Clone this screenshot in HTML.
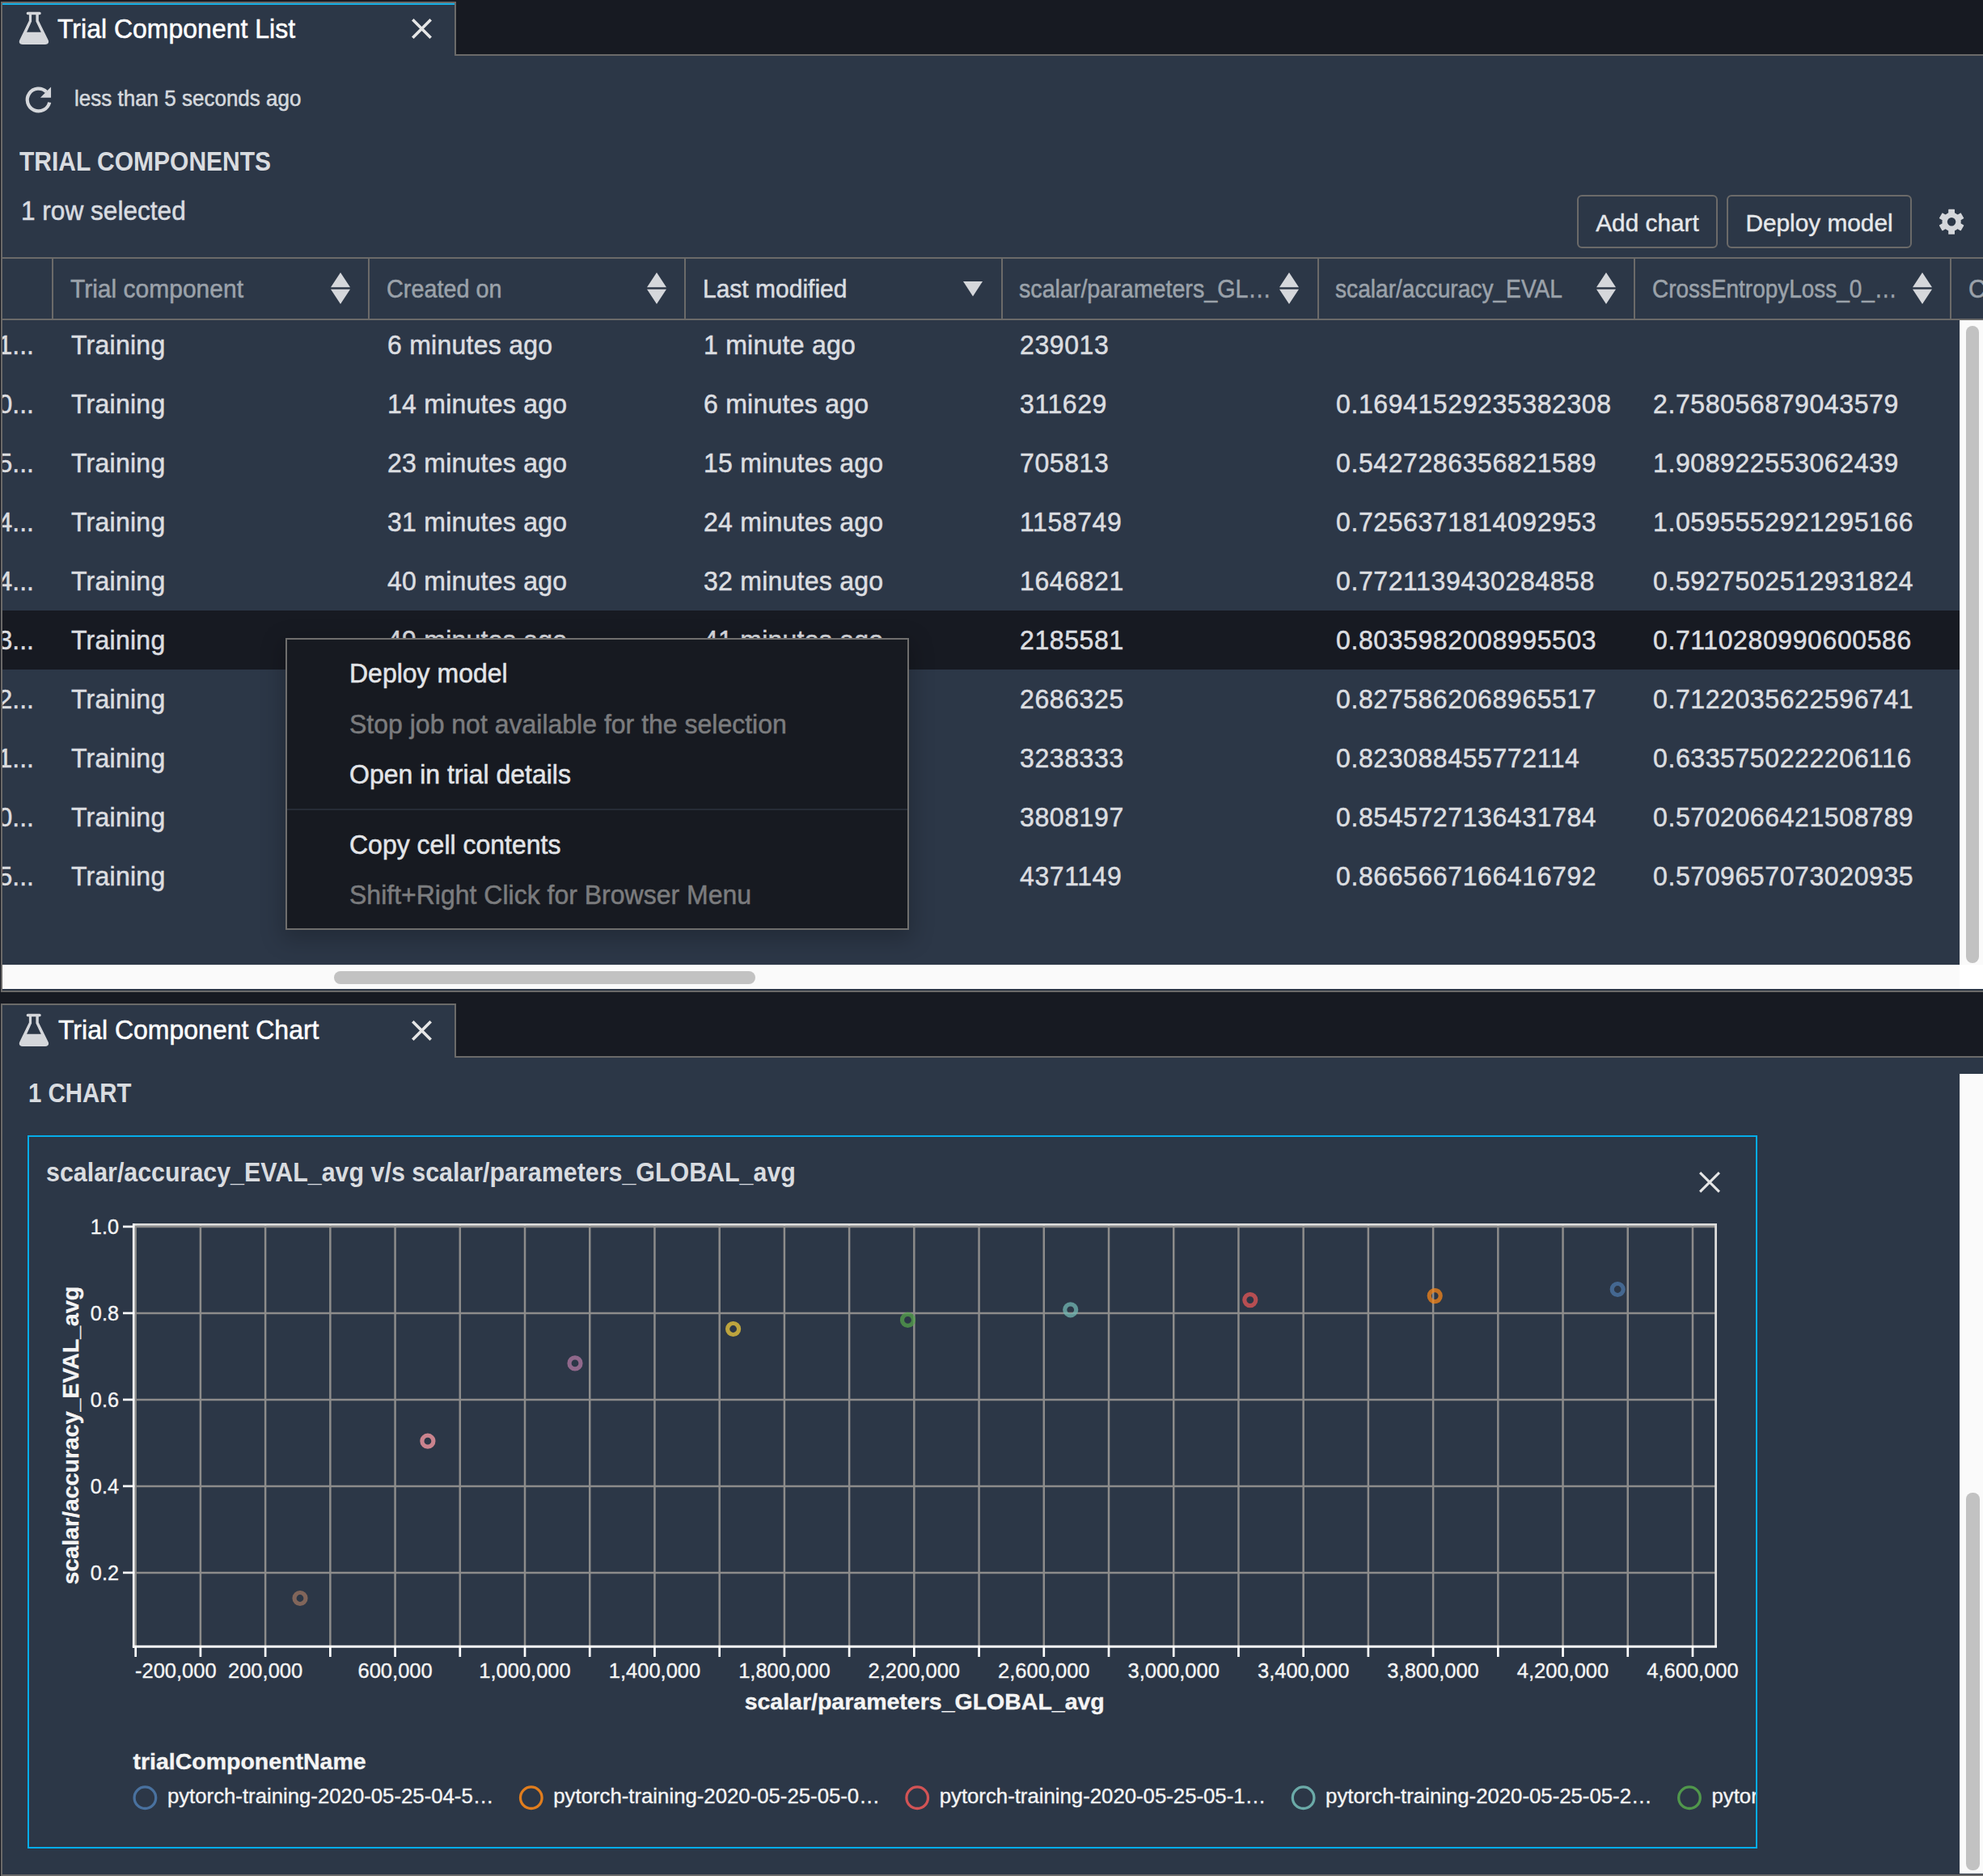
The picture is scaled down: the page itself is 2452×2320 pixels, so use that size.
<!DOCTYPE html>
<html><head><meta charset="utf-8"><style>
html,body{margin:0;padding:0;width:2452px;height:2320px;overflow:hidden;background:#171a22;font-family:"Liberation Sans", sans-serif;}
.r{position:absolute;}
.t{position:absolute;white-space:nowrap;line-height:1;-webkit-text-stroke:0.5px currentColor;transform-origin:0 84.67%;transform:scaleY(1.04);}
.t.b{-webkit-text-stroke:0;transform:scaleY(1.1);}
.btn{border:2px solid #6b6a69;border-radius:6px;color:#e6e8eb;font-size:29.8px;line-height:66px;text-align:center;-webkit-text-stroke:0.4px currentColor;box-sizing:content-box;}
</style></head><body>
<div class="r" style="left:1px;top:68px;width:2451px;height:1157px;background:#2c3747;"></div><div class="r" style="left:1px;top:68px;width:2px;height:1157px;background:#6b6a69;"></div><div class="r" style="left:563px;top:67px;width:1889px;height:2px;background:#6b6a69;"></div><div class="r" style="left:1px;top:2px;width:563px;height:67px;background:#2c3747;"></div><div class="r" style="left:1px;top:2px;width:563px;height:2px;background:#6b6a69;"></div><div class="r" style="left:1px;top:2px;width:2px;height:67px;background:#6b6a69;"></div><div class="r" style="left:562px;top:2px;width:2px;height:67px;background:#6b6a69;"></div><div class="r" style="left:3px;top:3.8px;width:559px;height:2.4px;background:#15b0e6;"></div><svg class="r" style="left:18px;top:10px" width="48" height="48" viewBox="0 0 48 48">
<path d="M16.4 4.7 H31 a1.75 1.75 0 0 1 0 3.5 H29.8 V15.4 L41.5 39.3 C43.1 42.6 41.5 44.9 38 44.9 H9.9 C6.4 44.9 4.8 42.6 6.4 39.3 L17.9 15.4 V8.2 H16.4 a1.75 1.75 0 0 1 0 -3.5 Z M21.1 8.2 V16.6 L15.1 29.8 H32.8 L26.4 16.6 V8.2 Z" fill="#d5d7db" fill-rule="evenodd"/>
</svg><div class="t" style="left:71.0px;top:19.9px;font-size:32px;color:#ffffff;font-weight:400;">Trial Component List</div><svg class="r" style="left:503px;top:17px" width="37" height="37" viewBox="0 0 37 37"><path d="M7.30 7.30 L29.70 29.70 M29.70 7.30 L7.30 29.70" stroke="#e6e6e6" stroke-width="3.6" stroke-linecap="butt"/></svg><svg class="r" style="left:26px;top:102px" width="44" height="44" viewBox="0 0 44 44">
<path d="M31.4 11.6 A13.9 13.9 0 1 0 35.2 24.6" fill="none" stroke="#d5d7db" stroke-width="4.2"/>
<path d="M37.05 5.6 V18.8 H23.9 Z" fill="#d5d7db"/>
</svg><div class="t" style="left:92.0px;top:109.0px;font-size:26px;color:#d5d9de;font-weight:400;">less than 5 seconds ago</div><div class="t b" style="left:24.0px;top:186.1px;font-size:30px;color:#d9dce0;font-weight:700;">TRIAL COMPONENTS</div><div class="t" style="left:26.0px;top:246.3px;font-size:31.6px;color:#d9dce0;font-weight:400;">1 row selected</div><div class="r btn" style="left:1950px;top:241px;width:170px;height:62px;">Add chart</div><div class="r btn" style="left:2135px;top:241px;width:225px;height:62px;">Deploy model</div><svg class="r" style="left:2393px;top:254px" width="40" height="40" viewBox="-20 -20 40 40">
<g fill="#d5d7db" transform="translate(0.1 0.3)">
<circle r="11.6"/>
<rect x="-3.9" y="-15.5" width="7.8" height="31" rx="0.6"/>
<rect x="-3.9" y="-15.5" width="7.8" height="31" rx="0.6" transform="rotate(60)"/>
<rect x="-3.9" y="-15.5" width="7.8" height="31" rx="0.6" transform="rotate(120)"/>
</g>
<circle cx="0.1" cy="0.3" r="5.2" fill="#2c3747"/>
</svg><div class="r" style="left:3px;top:396px;width:2420px;height:797px;overflow:hidden"><div class="r" style="left:0px;top:359px;width:2420px;height:73px;background:#171a22"></div><div class="t" style="right:2381px;top:14.9px;font-size:32px;color:#dcdee1">1...</div><div class="t" style="left:85px;top:14.9px;font-size:32px;color:#dcdee1;letter-spacing:0.25px;">Training</div><div class="t" style="left:476px;top:14.9px;font-size:32px;color:#dcdee1;letter-spacing:0.25px;">6 minutes ago</div><div class="t" style="left:867px;top:14.9px;font-size:32px;color:#dcdee1;letter-spacing:0.25px;">1 minute ago</div><div class="t" style="left:1258px;top:14.9px;font-size:32px;color:#dcdee1;letter-spacing:0.6px;">239013</div><div class="t" style="right:2381px;top:87.9px;font-size:32px;color:#dcdee1">0...</div><div class="t" style="left:85px;top:87.9px;font-size:32px;color:#dcdee1;letter-spacing:0.25px;">Training</div><div class="t" style="left:476px;top:87.9px;font-size:32px;color:#dcdee1;letter-spacing:0.25px;">14 minutes ago</div><div class="t" style="left:867px;top:87.9px;font-size:32px;color:#dcdee1;letter-spacing:0.25px;">6 minutes ago</div><div class="t" style="left:1258px;top:87.9px;font-size:32px;color:#dcdee1;letter-spacing:0.6px;">311629</div><div class="t" style="left:1649px;top:87.9px;font-size:32px;color:#dcdee1;letter-spacing:0.6px;">0.16941529235382308</div><div class="t" style="left:2041px;top:87.9px;font-size:32px;color:#dcdee1;letter-spacing:0.6px;">2.758056879043579</div><div class="t" style="right:2381px;top:160.9px;font-size:32px;color:#dcdee1">5...</div><div class="t" style="left:85px;top:160.9px;font-size:32px;color:#dcdee1;letter-spacing:0.25px;">Training</div><div class="t" style="left:476px;top:160.9px;font-size:32px;color:#dcdee1;letter-spacing:0.25px;">23 minutes ago</div><div class="t" style="left:867px;top:160.9px;font-size:32px;color:#dcdee1;letter-spacing:0.25px;">15 minutes ago</div><div class="t" style="left:1258px;top:160.9px;font-size:32px;color:#dcdee1;letter-spacing:0.6px;">705813</div><div class="t" style="left:1649px;top:160.9px;font-size:32px;color:#dcdee1;letter-spacing:0.6px;">0.5427286356821589</div><div class="t" style="left:2041px;top:160.9px;font-size:32px;color:#dcdee1;letter-spacing:0.6px;">1.908922553062439</div><div class="t" style="right:2381px;top:233.9px;font-size:32px;color:#dcdee1">4...</div><div class="t" style="left:85px;top:233.9px;font-size:32px;color:#dcdee1;letter-spacing:0.25px;">Training</div><div class="t" style="left:476px;top:233.9px;font-size:32px;color:#dcdee1;letter-spacing:0.25px;">31 minutes ago</div><div class="t" style="left:867px;top:233.9px;font-size:32px;color:#dcdee1;letter-spacing:0.25px;">24 minutes ago</div><div class="t" style="left:1258px;top:233.9px;font-size:32px;color:#dcdee1;letter-spacing:0.6px;">1158749</div><div class="t" style="left:1649px;top:233.9px;font-size:32px;color:#dcdee1;letter-spacing:0.6px;">0.7256371814092953</div><div class="t" style="left:2041px;top:233.9px;font-size:32px;color:#dcdee1;letter-spacing:0.6px;">1.0595552921295166</div><div class="t" style="right:2381px;top:306.9px;font-size:32px;color:#dcdee1">4...</div><div class="t" style="left:85px;top:306.9px;font-size:32px;color:#dcdee1;letter-spacing:0.25px;">Training</div><div class="t" style="left:476px;top:306.9px;font-size:32px;color:#dcdee1;letter-spacing:0.25px;">40 minutes ago</div><div class="t" style="left:867px;top:306.9px;font-size:32px;color:#dcdee1;letter-spacing:0.25px;">32 minutes ago</div><div class="t" style="left:1258px;top:306.9px;font-size:32px;color:#dcdee1;letter-spacing:0.6px;">1646821</div><div class="t" style="left:1649px;top:306.9px;font-size:32px;color:#dcdee1;letter-spacing:0.6px;">0.7721139430284858</div><div class="t" style="left:2041px;top:306.9px;font-size:32px;color:#dcdee1;letter-spacing:0.6px;">0.5927502512931824</div><div class="t" style="right:2381px;top:379.9px;font-size:32px;color:#dcdee1">3...</div><div class="t" style="left:85px;top:379.9px;font-size:32px;color:#dcdee1;letter-spacing:0.25px;">Training</div><div class="t" style="left:476px;top:379.9px;font-size:32px;color:#dcdee1;letter-spacing:0.25px;">49 minutes ago</div><div class="t" style="left:867px;top:379.9px;font-size:32px;color:#dcdee1;letter-spacing:0.25px;">41 minutes ago</div><div class="t" style="left:1258px;top:379.9px;font-size:32px;color:#dcdee1;letter-spacing:0.6px;">2185581</div><div class="t" style="left:1649px;top:379.9px;font-size:32px;color:#dcdee1;letter-spacing:0.6px;">0.8035982008995503</div><div class="t" style="left:2041px;top:379.9px;font-size:32px;color:#dcdee1;letter-spacing:0.6px;">0.7110280990600586</div><div class="t" style="right:2381px;top:452.9px;font-size:32px;color:#dcdee1">2...</div><div class="t" style="left:85px;top:452.9px;font-size:32px;color:#dcdee1;letter-spacing:0.25px;">Training</div><div class="t" style="left:1258px;top:452.9px;font-size:32px;color:#dcdee1;letter-spacing:0.6px;">2686325</div><div class="t" style="left:1649px;top:452.9px;font-size:32px;color:#dcdee1;letter-spacing:0.6px;">0.8275862068965517</div><div class="t" style="left:2041px;top:452.9px;font-size:32px;color:#dcdee1;letter-spacing:0.6px;">0.7122035622596741</div><div class="t" style="right:2381px;top:525.9px;font-size:32px;color:#dcdee1">1...</div><div class="t" style="left:85px;top:525.9px;font-size:32px;color:#dcdee1;letter-spacing:0.25px;">Training</div><div class="t" style="left:1258px;top:525.9px;font-size:32px;color:#dcdee1;letter-spacing:0.6px;">3238333</div><div class="t" style="left:1649px;top:525.9px;font-size:32px;color:#dcdee1;letter-spacing:0.6px;">0.823088455772114</div><div class="t" style="left:2041px;top:525.9px;font-size:32px;color:#dcdee1;letter-spacing:0.6px;">0.6335750222206116</div><div class="t" style="right:2381px;top:598.9px;font-size:32px;color:#dcdee1">0...</div><div class="t" style="left:85px;top:598.9px;font-size:32px;color:#dcdee1;letter-spacing:0.25px;">Training</div><div class="t" style="left:1258px;top:598.9px;font-size:32px;color:#dcdee1;letter-spacing:0.6px;">3808197</div><div class="t" style="left:1649px;top:598.9px;font-size:32px;color:#dcdee1;letter-spacing:0.6px;">0.8545727136431784</div><div class="t" style="left:2041px;top:598.9px;font-size:32px;color:#dcdee1;letter-spacing:0.6px;">0.5702066421508789</div><div class="t" style="right:2381px;top:671.9px;font-size:32px;color:#dcdee1">5...</div><div class="t" style="left:85px;top:671.9px;font-size:32px;color:#dcdee1;letter-spacing:0.25px;">Training</div><div class="t" style="left:1258px;top:671.9px;font-size:32px;color:#dcdee1;letter-spacing:0.6px;">4371149</div><div class="t" style="left:1649px;top:671.9px;font-size:32px;color:#dcdee1;letter-spacing:0.6px;">0.8665667166416792</div><div class="t" style="left:2041px;top:671.9px;font-size:32px;color:#dcdee1;letter-spacing:0.6px;">0.5709657073020935</div></div><div class="r" style="left:3px;top:318px;width:2449px;height:2px;background:#6b6a69;"></div><div class="r" style="left:3px;top:394px;width:2449px;height:2px;background:#6b6a69;"></div><div class="r" style="left:3px;top:320px;width:2449px;height:74px;overflow:hidden"><div class="r" style="left:61px;top:0px;width:2px;height:74px;background:#6b6a69"></div><div class="r" style="left:452px;top:0px;width:2px;height:74px;background:#6b6a69"></div><div class="r" style="left:843px;top:0px;width:2px;height:74px;background:#6b6a69"></div><div class="r" style="left:1235px;top:0px;width:2px;height:74px;background:#6b6a69"></div><div class="r" style="left:1626px;top:0px;width:2px;height:74px;background:#6b6a69"></div><div class="r" style="left:2017px;top:0px;width:2px;height:74px;background:#6b6a69"></div><div class="r" style="left:2408px;top:0px;width:2px;height:74px;background:#6b6a69"></div><div class="t" style="left:84px;top:22.6px;font-size:30px;color:#9ba2aa;transform:scale(1.0,1.04)">Trial component</div><svg class="r" style="left:406px;top:17px" width="24" height="39" viewBox="0 0 24 39"><path d="M12 0 L24 18.2 H0 Z M0 20.8 H24 L12 39 Z" fill="#d5d7db"/></svg><div class="t" style="left:475px;top:22.6px;font-size:30px;color:#9ba2aa;transform:scale(0.9595687331536388,1.04)">Created on</div><svg class="r" style="left:797px;top:17px" width="24" height="39" viewBox="0 0 24 39"><path d="M12 0 L24 18.2 H0 Z M0 20.8 H24 L12 39 Z" fill="#d5d7db"/></svg><div class="t" style="left:866px;top:22.6px;font-size:30px;color:#dadde1;transform:scale(1.0,1.04)">Last modified</div><svg class="r" style="left:1188px;top:28px" width="24" height="19" viewBox="0 0 24 19"><path d="M0 0 H24 L12 18.5 Z" fill="#d5d7db"/></svg><div class="t" style="left:1257px;top:22.6px;font-size:30px;color:#9ba2aa;transform:scale(0.9547123623011016,1.04)">scalar/parameters_GL…</div><svg class="r" style="left:1579px;top:17px" width="24" height="39" viewBox="0 0 24 39"><path d="M12 0 L24 18.2 H0 Z M0 20.8 H24 L12 39 Z" fill="#d5d7db"/></svg><div class="t" style="left:1648px;top:22.6px;font-size:30px;color:#9ba2aa;transform:scale(0.9379172229639519,1.04)">scalar/accuracy_EVAL</div><svg class="r" style="left:1971px;top:17px" width="24" height="39" viewBox="0 0 24 39"><path d="M12 0 L24 18.2 H0 Z M0 20.8 H24 L12 39 Z" fill="#d5d7db"/></svg><div class="t" style="left:2040px;top:22.6px;font-size:30px;color:#9ba2aa;transform:scale(0.931119311193112,1.04)">CrossEntropyLoss_0_…</div><svg class="r" style="left:2362px;top:17px" width="24" height="39" viewBox="0 0 24 39"><path d="M12 0 L24 18.2 H0 Z M0 20.8 H24 L12 39 Z" fill="#d5d7db"/></svg><div class="t" style="left:2431px;top:22.6px;font-size:30px;color:#9ba2aa;transform:scale(1.0,1.04)">C</div></div><div class="r" style="left:2423px;top:396px;width:29px;height:797px;background:#fafafa;border-left:1px solid #e8e8e8;box-sizing:border-box"></div><div class="r" style="left:2431px;top:403px;width:16px;height:788px;background:#c2c2c2;border-radius:8px"></div><div class="r" style="left:3px;top:1193px;width:2420px;height:30px;background:#fafafa;border-top:1px solid #e8e8e8;box-sizing:border-box"></div><div class="r" style="left:2423px;top:1193px;width:29px;height:30px;background:#ffffff;"></div><div class="r" style="left:413px;top:1201px;width:521px;height:16px;background:#c2c2c2;border-radius:8px"></div><div class="r" style="left:1px;top:1225px;width:2451px;height:2px;background:#6b6a69;"></div><div class="r" style="left:353px;top:789px;width:771px;height:361px;background:#171a21;border:2px solid #6f6e6d;box-sizing:border-box;box-shadow:0 8px 26px 4px rgba(0,0,0,0.22)"></div><div class="r" style="left:355px;top:1000px;width:767px;height:2px;background:#262c36;"></div><div class="t" style="left:432.0px;top:817.1px;font-size:32px;color:#e3e5e8;font-weight:400;">Deploy model</div><div class="t" style="left:432.0px;top:880.4px;font-size:32px;color:#7b7c7e;font-weight:400;">Stop job not available for the selection</div><div class="t" style="left:432.0px;top:942.4px;font-size:32px;color:#e3e5e8;font-weight:400;">Open in trial details</div><div class="t" style="left:432.0px;top:1029.3px;font-size:32px;color:#e3e5e8;font-weight:400;">Copy cell contents</div><div class="t" style="left:432.0px;top:1091.3px;font-size:32px;color:#7b7c7e;font-weight:400;">Shift+Right Click for Browser Menu</div><div class="r" style="left:563px;top:1306px;width:1889px;height:2px;background:#6b6a69;"></div><div class="r" style="left:1px;top:1308px;width:2451px;height:1010px;background:#2c3747;"></div><div class="r" style="left:1px;top:1308px;width:2px;height:1010px;background:#6b6a69;"></div><div class="r" style="left:1px;top:1241px;width:563px;height:67px;background:#2c3747;"></div><div class="r" style="left:1px;top:1241px;width:563px;height:2px;background:#6b6a69;"></div><div class="r" style="left:1px;top:1241px;width:2px;height:67px;background:#6b6a69;"></div><div class="r" style="left:562px;top:1241px;width:2px;height:67px;background:#6b6a69;"></div><svg class="r" style="left:18px;top:1249px" width="48" height="48" viewBox="0 0 48 48">
<path d="M16.4 4.7 H31 a1.75 1.75 0 0 1 0 3.5 H29.8 V15.4 L41.5 39.3 C43.1 42.6 41.5 44.9 38 44.9 H9.9 C6.4 44.9 4.8 42.6 6.4 39.3 L17.9 15.4 V8.2 H16.4 a1.75 1.75 0 0 1 0 -3.5 Z M21.1 8.2 V16.6 L15.1 29.8 H32.8 L26.4 16.6 V8.2 Z" fill="#d5d7db" fill-rule="evenodd"/>
</svg><div class="t" style="left:72.0px;top:1257.9px;font-size:32px;color:#ffffff;font-weight:400;">Trial Component Chart</div><svg class="r" style="left:503px;top:1256px" width="37" height="37" viewBox="0 0 37 37"><path d="M7.30 7.30 L29.70 29.70 M29.70 7.30 L7.30 29.70" stroke="#e6e6e6" stroke-width="3.6" stroke-linecap="butt"/></svg><div class="r" style="left:1px;top:2318px;width:2451px;height:2px;background:#6b6a69;"></div><div class="t b" style="left:35.0px;top:1338.1px;font-size:29.4px;color:#d9dce0;font-weight:700;">1 CHART</div><div class="r" style="left:2423px;top:1328px;width:29px;height:989px;background:#fafafa;border-left:1px solid #e8e8e8;box-sizing:border-box"></div><div class="r" style="left:2431px;top:1846px;width:17px;height:467px;background:#c2c2c2;border-radius:8px"></div><div class="r" style="left:34px;top:1404px;width:2139px;height:882px;border:2px solid #05adea;box-sizing:border-box;overflow:hidden"></div><div class="t b" style="left:57.0px;top:1434.7px;font-size:30.4px;color:#d9dce0;font-weight:700;">scalar/accuracy_EVAL_avg v/s scalar/parameters_GLOBAL_avg</div><svg class="r" style="left:2095px;top:1443px" width="38" height="38" viewBox="0 0 38 38"><path d="M7.08 7.08 L30.92 30.92 M30.92 7.08 L7.08 30.92" stroke="#e6e6e6" stroke-width="3" stroke-linecap="butt"/></svg><svg class="r" style="left:0px;top:0px" width="2452" height="2320" viewBox="0 0 2452 2320"><line x1="167.70" y1="1514.35" x2="167.70" y2="2036.35" stroke="#8d8c8b" stroke-width="2.5"/><line x1="247.92" y1="1514.35" x2="247.92" y2="2036.35" stroke="#8d8c8b" stroke-width="2.5"/><line x1="328.14" y1="1514.35" x2="328.14" y2="2036.35" stroke="#8d8c8b" stroke-width="2.5"/><line x1="408.36" y1="1514.35" x2="408.36" y2="2036.35" stroke="#8d8c8b" stroke-width="2.5"/><line x1="488.58" y1="1514.35" x2="488.58" y2="2036.35" stroke="#8d8c8b" stroke-width="2.5"/><line x1="568.80" y1="1514.35" x2="568.80" y2="2036.35" stroke="#8d8c8b" stroke-width="2.5"/><line x1="649.02" y1="1514.35" x2="649.02" y2="2036.35" stroke="#8d8c8b" stroke-width="2.5"/><line x1="729.24" y1="1514.35" x2="729.24" y2="2036.35" stroke="#8d8c8b" stroke-width="2.5"/><line x1="809.46" y1="1514.35" x2="809.46" y2="2036.35" stroke="#8d8c8b" stroke-width="2.5"/><line x1="889.68" y1="1514.35" x2="889.68" y2="2036.35" stroke="#8d8c8b" stroke-width="2.5"/><line x1="969.90" y1="1514.35" x2="969.90" y2="2036.35" stroke="#8d8c8b" stroke-width="2.5"/><line x1="1050.12" y1="1514.35" x2="1050.12" y2="2036.35" stroke="#8d8c8b" stroke-width="2.5"/><line x1="1130.34" y1="1514.35" x2="1130.34" y2="2036.35" stroke="#8d8c8b" stroke-width="2.5"/><line x1="1210.56" y1="1514.35" x2="1210.56" y2="2036.35" stroke="#8d8c8b" stroke-width="2.5"/><line x1="1290.78" y1="1514.35" x2="1290.78" y2="2036.35" stroke="#8d8c8b" stroke-width="2.5"/><line x1="1371.00" y1="1514.35" x2="1371.00" y2="2036.35" stroke="#8d8c8b" stroke-width="2.5"/><line x1="1451.22" y1="1514.35" x2="1451.22" y2="2036.35" stroke="#8d8c8b" stroke-width="2.5"/><line x1="1531.44" y1="1514.35" x2="1531.44" y2="2036.35" stroke="#8d8c8b" stroke-width="2.5"/><line x1="1611.66" y1="1514.35" x2="1611.66" y2="2036.35" stroke="#8d8c8b" stroke-width="2.5"/><line x1="1691.88" y1="1514.35" x2="1691.88" y2="2036.35" stroke="#8d8c8b" stroke-width="2.5"/><line x1="1772.10" y1="1514.35" x2="1772.10" y2="2036.35" stroke="#8d8c8b" stroke-width="2.5"/><line x1="1852.32" y1="1514.35" x2="1852.32" y2="2036.35" stroke="#8d8c8b" stroke-width="2.5"/><line x1="1932.54" y1="1514.35" x2="1932.54" y2="2036.35" stroke="#8d8c8b" stroke-width="2.5"/><line x1="2012.76" y1="1514.35" x2="2012.76" y2="2036.35" stroke="#8d8c8b" stroke-width="2.5"/><line x1="2092.98" y1="1514.35" x2="2092.98" y2="2036.35" stroke="#8d8c8b" stroke-width="2.5"/><line x1="165.25" y1="1944.90" x2="2121.6" y2="1944.90" stroke="#8d8c8b" stroke-width="2.5"/><line x1="165.25" y1="1837.91" x2="2121.6" y2="1837.91" stroke="#8d8c8b" stroke-width="2.5"/><line x1="165.25" y1="1730.93" x2="2121.6" y2="1730.93" stroke="#8d8c8b" stroke-width="2.5"/><line x1="165.25" y1="1623.94" x2="2121.6" y2="1623.94" stroke="#8d8c8b" stroke-width="2.5"/><line x1="165.25" y1="1516.95" x2="2121.6" y2="1516.95" stroke="#8d8c8b" stroke-width="2.5"/><line x1="165.25" y1="1514.35" x2="2123.0" y2="1514.35" stroke="#dddcdb" stroke-width="2.6"/><line x1="2121.6" y1="1513.05" x2="2121.6" y2="2036.35" stroke="#dddcdb" stroke-width="2.8"/><line x1="165.25" y1="1513.05" x2="165.25" y2="2037.85" stroke="#ffffff" stroke-width="2.7"/><line x1="163.9" y1="2036.35" x2="2123.0" y2="2036.35" stroke="#ffffff" stroke-width="3"/><line x1="167.70" y1="2036.35" x2="167.70" y2="2049" stroke="#ffffff" stroke-width="2.7"/><line x1="247.92" y1="2036.35" x2="247.92" y2="2049" stroke="#ffffff" stroke-width="2.7"/><line x1="328.14" y1="2036.35" x2="328.14" y2="2049" stroke="#ffffff" stroke-width="2.7"/><line x1="408.36" y1="2036.35" x2="408.36" y2="2049" stroke="#ffffff" stroke-width="2.7"/><line x1="488.58" y1="2036.35" x2="488.58" y2="2049" stroke="#ffffff" stroke-width="2.7"/><line x1="568.80" y1="2036.35" x2="568.80" y2="2049" stroke="#ffffff" stroke-width="2.7"/><line x1="649.02" y1="2036.35" x2="649.02" y2="2049" stroke="#ffffff" stroke-width="2.7"/><line x1="729.24" y1="2036.35" x2="729.24" y2="2049" stroke="#ffffff" stroke-width="2.7"/><line x1="809.46" y1="2036.35" x2="809.46" y2="2049" stroke="#ffffff" stroke-width="2.7"/><line x1="889.68" y1="2036.35" x2="889.68" y2="2049" stroke="#ffffff" stroke-width="2.7"/><line x1="969.90" y1="2036.35" x2="969.90" y2="2049" stroke="#ffffff" stroke-width="2.7"/><line x1="1050.12" y1="2036.35" x2="1050.12" y2="2049" stroke="#ffffff" stroke-width="2.7"/><line x1="1130.34" y1="2036.35" x2="1130.34" y2="2049" stroke="#ffffff" stroke-width="2.7"/><line x1="1210.56" y1="2036.35" x2="1210.56" y2="2049" stroke="#ffffff" stroke-width="2.7"/><line x1="1290.78" y1="2036.35" x2="1290.78" y2="2049" stroke="#ffffff" stroke-width="2.7"/><line x1="1371.00" y1="2036.35" x2="1371.00" y2="2049" stroke="#ffffff" stroke-width="2.7"/><line x1="1451.22" y1="2036.35" x2="1451.22" y2="2049" stroke="#ffffff" stroke-width="2.7"/><line x1="1531.44" y1="2036.35" x2="1531.44" y2="2049" stroke="#ffffff" stroke-width="2.7"/><line x1="1611.66" y1="2036.35" x2="1611.66" y2="2049" stroke="#ffffff" stroke-width="2.7"/><line x1="1691.88" y1="2036.35" x2="1691.88" y2="2049" stroke="#ffffff" stroke-width="2.7"/><line x1="1772.10" y1="2036.35" x2="1772.10" y2="2049" stroke="#ffffff" stroke-width="2.7"/><line x1="1852.32" y1="2036.35" x2="1852.32" y2="2049" stroke="#ffffff" stroke-width="2.7"/><line x1="1932.54" y1="2036.35" x2="1932.54" y2="2049" stroke="#ffffff" stroke-width="2.7"/><line x1="2012.76" y1="2036.35" x2="2012.76" y2="2049" stroke="#ffffff" stroke-width="2.7"/><line x1="2092.98" y1="2036.35" x2="2092.98" y2="2049" stroke="#ffffff" stroke-width="2.7"/><line x1="152" y1="1944.90" x2="165.25" y2="1944.90" stroke="#ffffff" stroke-width="2.7"/><text x="147" y="1953.5" text-anchor="end" font-size="25.3" fill="#f4f4f4" stroke="#f4f4f4" stroke-width="0.35" font-family="Liberation Sans">0.2</text><line x1="152" y1="1837.91" x2="165.25" y2="1837.91" stroke="#ffffff" stroke-width="2.7"/><text x="147" y="1846.5" text-anchor="end" font-size="25.3" fill="#f4f4f4" stroke="#f4f4f4" stroke-width="0.35" font-family="Liberation Sans">0.4</text><line x1="152" y1="1730.93" x2="165.25" y2="1730.93" stroke="#ffffff" stroke-width="2.7"/><text x="147" y="1739.5" text-anchor="end" font-size="25.3" fill="#f4f4f4" stroke="#f4f4f4" stroke-width="0.35" font-family="Liberation Sans">0.6</text><line x1="152" y1="1623.94" x2="165.25" y2="1623.94" stroke="#ffffff" stroke-width="2.7"/><text x="147" y="1632.5" text-anchor="end" font-size="25.3" fill="#f4f4f4" stroke="#f4f4f4" stroke-width="0.35" font-family="Liberation Sans">0.8</text><line x1="152" y1="1516.95" x2="165.25" y2="1516.95" stroke="#ffffff" stroke-width="2.7"/><text x="147" y="1525.5" text-anchor="end" font-size="25.3" fill="#f4f4f4" stroke="#f4f4f4" stroke-width="0.35" font-family="Liberation Sans">1.0</text><text x="167.0" y="2075" text-anchor="start" font-size="25.5" fill="#f4f4f4" stroke="#f4f4f4" stroke-width="0.35" font-family="Liberation Sans">-200,000</text><text x="328.1" y="2075" text-anchor="middle" font-size="25.5" fill="#f4f4f4" stroke="#f4f4f4" stroke-width="0.35" font-family="Liberation Sans">200,000</text><text x="488.6" y="2075" text-anchor="middle" font-size="25.5" fill="#f4f4f4" stroke="#f4f4f4" stroke-width="0.35" font-family="Liberation Sans">600,000</text><text x="649.0" y="2075" text-anchor="middle" font-size="25.5" fill="#f4f4f4" stroke="#f4f4f4" stroke-width="0.35" font-family="Liberation Sans">1,000,000</text><text x="809.5" y="2075" text-anchor="middle" font-size="25.5" fill="#f4f4f4" stroke="#f4f4f4" stroke-width="0.35" font-family="Liberation Sans">1,400,000</text><text x="969.9" y="2075" text-anchor="middle" font-size="25.5" fill="#f4f4f4" stroke="#f4f4f4" stroke-width="0.35" font-family="Liberation Sans">1,800,000</text><text x="1130.3" y="2075" text-anchor="middle" font-size="25.5" fill="#f4f4f4" stroke="#f4f4f4" stroke-width="0.35" font-family="Liberation Sans">2,200,000</text><text x="1290.8" y="2075" text-anchor="middle" font-size="25.5" fill="#f4f4f4" stroke="#f4f4f4" stroke-width="0.35" font-family="Liberation Sans">2,600,000</text><text x="1451.2" y="2075" text-anchor="middle" font-size="25.5" fill="#f4f4f4" stroke="#f4f4f4" stroke-width="0.35" font-family="Liberation Sans">3,000,000</text><text x="1611.7" y="2075" text-anchor="middle" font-size="25.5" fill="#f4f4f4" stroke="#f4f4f4" stroke-width="0.35" font-family="Liberation Sans">3,400,000</text><text x="1772.1" y="2075" text-anchor="middle" font-size="25.5" fill="#f4f4f4" stroke="#f4f4f4" stroke-width="0.35" font-family="Liberation Sans">3,800,000</text><text x="1932.5" y="2075" text-anchor="middle" font-size="25.5" fill="#f4f4f4" stroke="#f4f4f4" stroke-width="0.35" font-family="Liberation Sans">4,200,000</text><text x="2093.0" y="2075" text-anchor="middle" font-size="25.5" fill="#f4f4f4" stroke="#f4f4f4" stroke-width="0.35" font-family="Liberation Sans">4,600,000</text><text x="1143.2" y="2114" text-anchor="middle" font-size="28.5" font-weight="700" fill="#f4f4f4" stroke="#f4f4f4" stroke-width="0.35" font-family="Liberation Sans">scalar/parameters_GLOBAL_avg</text><text transform="translate(96.5 1775.1) rotate(-90)" text-anchor="middle" font-size="28.5" font-weight="700" fill="#f4f4f4" stroke="#f4f4f4" stroke-width="0.35" font-family="Liberation Sans">scalar/accuracy_EVAL_avg</text><circle cx="371" cy="1976.5" r="7" fill="none" stroke="#9d7660" stroke-width="5.2" opacity="0.75"/><circle cx="528.9" cy="1782.2" r="7" fill="none" stroke="#ff9da6" stroke-width="5.2" opacity="0.75"/><circle cx="711" cy="1685.9" r="7" fill="none" stroke="#b279a2" stroke-width="5.2" opacity="0.75"/><circle cx="906.6" cy="1643.5" r="7" fill="none" stroke="#eeca3b" stroke-width="5.2" opacity="0.75"/><circle cx="1122.5" cy="1632.4" r="7" fill="none" stroke="#54a24b" stroke-width="5.2" opacity="0.75"/><circle cx="1323.7" cy="1619.8" r="7" fill="none" stroke="#72b7b2" stroke-width="5.2" opacity="0.75"/><circle cx="1545.8" cy="1607.6" r="7" fill="none" stroke="#e45756" stroke-width="5.2" opacity="0.75"/><circle cx="1774.2" cy="1602.6" r="7" fill="none" stroke="#f58518" stroke-width="5.2" opacity="0.75"/><circle cx="2000.2" cy="1594.5" r="7" fill="none" stroke="#4c78a8" stroke-width="5.2" opacity="0.75"/><text x="164.4" y="2188" font-size="28.5" font-weight="700" fill="#f4f4f4" stroke="#f4f4f4" stroke-width="0.35" font-family="Liberation Sans">trialComponentName</text><clipPath id="cc"><rect x="36" y="1406" width="2135" height="878"/></clipPath><g clip-path="url(#cc)"><circle cx="179.4" cy="2223.2" r="13.3" fill="none" stroke="#4c78a8" stroke-width="3.3" opacity="0.9"/><text x="206.9" y="2230.4" font-size="25.75" fill="#f4f4f4" stroke="#f4f4f4" stroke-width="0.35" font-family="Liberation Sans">pytorch-training-2020-05-25-04-5…</text><circle cx="656.8" cy="2223.2" r="13.3" fill="none" stroke="#f58518" stroke-width="3.3" opacity="0.9"/><text x="684.3" y="2230.4" font-size="25.75" fill="#f4f4f4" stroke="#f4f4f4" stroke-width="0.35" font-family="Liberation Sans">pytorch-training-2020-05-25-05-0…</text><circle cx="1134.2" cy="2223.2" r="13.3" fill="none" stroke="#e45756" stroke-width="3.3" opacity="0.9"/><text x="1161.7" y="2230.4" font-size="25.75" fill="#f4f4f4" stroke="#f4f4f4" stroke-width="0.35" font-family="Liberation Sans">pytorch-training-2020-05-25-05-1…</text><circle cx="1611.6" cy="2223.2" r="13.3" fill="none" stroke="#72b7b2" stroke-width="3.3" opacity="0.9"/><text x="1639.1" y="2230.4" font-size="25.75" fill="#f4f4f4" stroke="#f4f4f4" stroke-width="0.35" font-family="Liberation Sans">pytorch-training-2020-05-25-05-2…</text><circle cx="2089.0" cy="2223.2" r="13.3" fill="none" stroke="#54a24b" stroke-width="3.3" opacity="0.9"/><text x="2116.5" y="2230.4" font-size="25.75" fill="#f4f4f4" stroke="#f4f4f4" stroke-width="0.35" font-family="Liberation Sans">pytorch-training-2020-05-25-05-3…</text></g></svg>
</body></html>
